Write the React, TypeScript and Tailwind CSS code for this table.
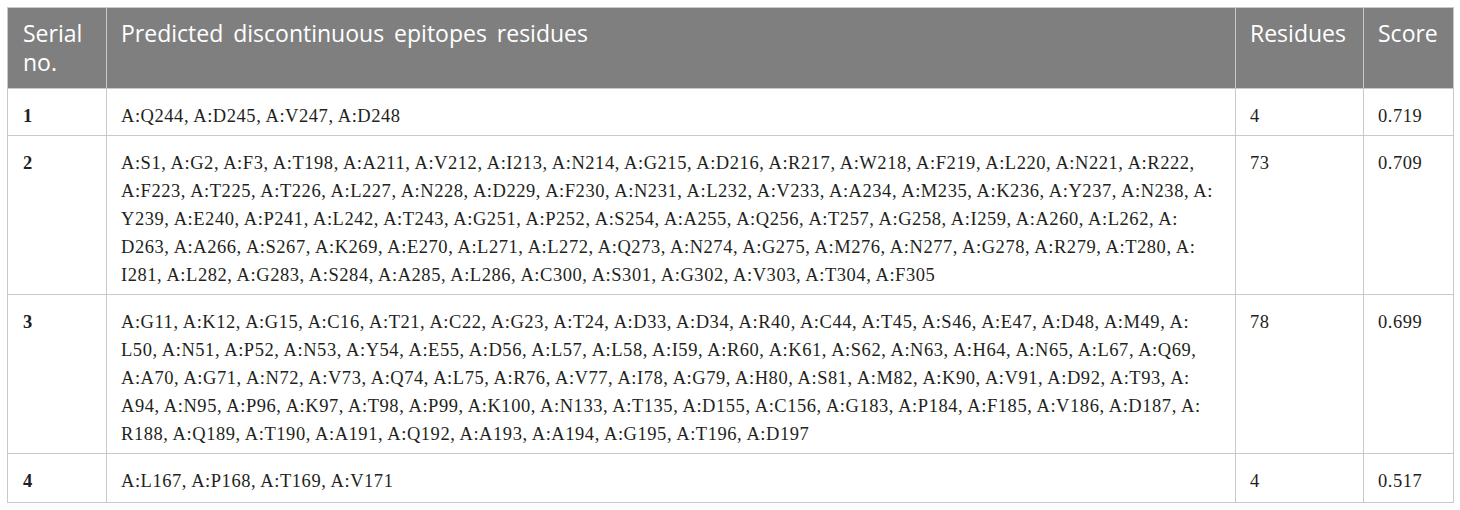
const rows: { no: string; lines: string[]; residues: string; score: string }[] = [
  {
    no: "1",
    lines: ["A:Q244, A:D245, A:V247, A:D248"],
    residues: "4",
    score: "0.719",
  },
  {
    no: "2",
    lines: [
      "A:S1, A:G2, A:F3, A:T198, A:A211, A:V212, A:I213, A:N214, A:G215, A:D216, A:R217, A:W218, A:F219, A:L220, A:N221, A:R222,",
      "A:F223, A:T225, A:T226, A:L227, A:N228, A:D229, A:F230, A:N231, A:L232, A:V233, A:A234, A:M235, A:K236, A:Y237, A:N238, A:",
      "Y239, A:E240, A:P241, A:L242, A:T243, A:G251, A:P252, A:S254, A:A255, A:Q256, A:T257, A:G258, A:I259, A:A260, A:L262, A:",
      "D263, A:A266, A:S267, A:K269, A:E270, A:L271, A:L272, A:Q273, A:N274, A:G275, A:M276, A:N277, A:G278, A:R279, A:T280, A:",
      "I281, A:L282, A:G283, A:S284, A:A285, A:L286, A:C300, A:S301, A:G302, A:V303, A:T304, A:F305",
    ],
    residues: "73",
    score: "0.709",
  },
  {
    no: "3",
    lines: [
      "A:G11, A:K12, A:G15, A:C16, A:T21, A:C22, A:G23, A:T24, A:D33, A:D34, A:R40, A:C44, A:T45, A:S46, A:E47, A:D48, A:M49, A:",
      "L50, A:N51, A:P52, A:N53, A:Y54, A:E55, A:D56, A:L57, A:L58, A:I59, A:R60, A:K61, A:S62, A:N63, A:H64, A:N65, A:L67, A:Q69,",
      "A:A70, A:G71, A:N72, A:V73, A:Q74, A:L75, A:R76, A:V77, A:I78, A:G79, A:H80, A:S81, A:M82, A:K90, A:V91, A:D92, A:T93, A:",
      "A94, A:N95, A:P96, A:K97, A:T98, A:P99, A:K100, A:N133, A:T135, A:D155, A:C156, A:G183, A:P184, A:F185, A:V186, A:D187, A:",
      "R188, A:Q189, A:T190, A:A191, A:Q192, A:A193, A:A194, A:G195, A:T196, A:D197",
    ],
    residues: "78",
    score: "0.699",
  },
  {
    no: "4",
    lines: ["A:L167, A:P168, A:T169, A:V171"],
    residues: "4",
    score: "0.517",
  },
];

export default function App() {
  return (
    <div className="bg-white w-[1460px] h-[510px] pt-[7px] pl-[7px]">
      <table className="table-fixed border-collapse w-[1446px]">
        <colgroup>
          <col className="w-[99px]" />
          <col className="w-[1129px]" />
          <col className="w-[128px]" />
          <col className="w-[90px]" />
        </colgroup>
        <thead>
          <tr className="bg-[#7f7f7f] text-white font-['Open_Sans',sans-serif] text-[23px] leading-[29px] text-left align-top">
            <th className="font-normal border border-[#c9c9c9] pl-[15px] pt-[11px] pb-[11px]">
              Serial
              <br />
              no.
            </th>
            <th className="font-normal border border-[#c9c9c9] pl-[14px] pt-[11px] [word-spacing:4px]">
              Predicted discontinuous epitopes residues
            </th>
            <th className="font-normal border border-[#c9c9c9] pl-[14px] pt-[11px]">Residues</th>
            <th className="font-normal border border-[#c9c9c9] pl-[14px] pt-[11px]">Score</th>
          </tr>
        </thead>
        <tbody className="font-['Liberation_Serif',serif] text-[18.5px] tracking-[0.55px] leading-[28px] text-[#231f20]">
          {rows.map((r, idx) => {
            const pad = idx === rows.length - 1 ? "pt-[13px] pb-[7px]" : "pt-[13px] pb-[5px]";
            return (
              <tr key={r.no} className="align-top">
                <td className={`border border-[#c9c9c9] pl-[15px] font-bold ${pad}`}>{r.no}</td>
                <td className={`border border-[#c9c9c9] pl-[14px] ${pad}`}>
                  {r.lines.map((l, i) => (
                    <div key={i} className="whitespace-nowrap">
                      {l}
                    </div>
                  ))}
                </td>
                <td className={`border border-[#c9c9c9] pl-[14px] ${pad}`}>{r.residues}</td>
                <td className={`border border-[#c9c9c9] pl-[14px] ${pad}`}>{r.score}</td>
              </tr>
            );
          })}
        </tbody>
      </table>
    </div>
  );
}
